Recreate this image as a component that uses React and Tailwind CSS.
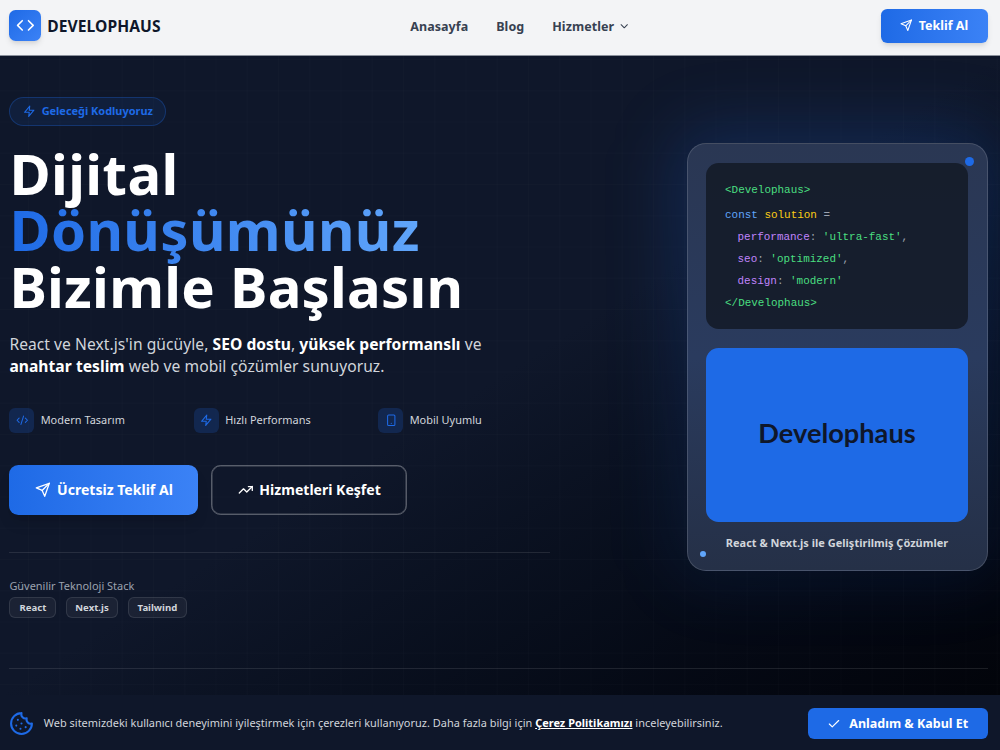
import clsx from 'clsx';
import { ChevronDown, Code, CodeXml, Smartphone, TrendingUp, Cookie, Check } from 'lucide-react';
import { FiSend, FiZap } from 'react-icons/fi';

const NAV = ['Anasayfa', 'Blog', 'Hizmetler'];

const FEATURES = [
  { label: 'Modern Tasarım', icon: CodeXml },
  { label: 'Hızlı Performans', icon: FiZap },
  { label: 'Mobil Uyumlu', icon: Smartphone },
];

const STACK = ['React', 'Next.js', 'Tailwind'];

const CODE = [
  { key: 'performance', value: "'ultra-fast'", comma: true },
  { key: 'seo', value: "'optimized'", comma: true },
  { key: 'design', value: "'modern'", comma: false },
];

function Header() {
  return (
    <header className="relative z-10 flex h-[56px] items-center justify-between border-b border-[#8b919c] bg-[#f3f4f6] pl-[9.4px] pr-[12.5px] pb-[3.5px]">
      <div className="flex w-[324px] items-center gap-[6.5px]">
        <div className="flex size-[31.25px] items-center justify-center rounded-[6.5px] bg-linear-to-br from-[#1e6ae6] to-[#3b82f6] text-white shadow-md">
          <Code size={18.75} />
        </div>
        <span className="pt-[2.5px] text-[15.6px] font-bold tracking-[0.08px] text-[#0f172a]">DEVELOPHAUS</span>
      </div>
      <nav className="flex items-center gap-[28px] pt-[2.5px] text-[12.5px] font-bold tracking-[0.06px] text-[#374151]">
        {NAV.map((item) => (
          <a key={item} href="#" className="flex items-center gap-[4px]">
            {item}
            {item === 'Hizmetler' && <ChevronDown size={12.5} className="mb-[2px]" />}
          </a>
        ))}
      </nav>
      <div className="flex w-[280px] justify-end">
        <button className="flex h-[34.4px] w-[106.5px] items-center justify-center gap-[6px] rounded-[6.25px] bg-linear-to-r from-[#1e6ae6] to-[#3b82f6] text-[12.5px] font-bold text-white shadow-md">
          <FiSend size={12.5} />
          <span className="pt-[2px]">Teklif Al</span>
        </button>
      </div>
    </header>
  );
}

function CodeBlock() {
  return (
    <div className="h-[166px] rounded-[12.5px] bg-[#131a26]/85 px-[18.75px] pt-[16.5px] font-['Liberation_Mono',monospace] text-[10.94px] leading-[22px] text-[#9ca3af]">
      <p className="mb-[3px] text-[#4ade80]">&lt;Develophaus&gt;</p>
      <p>
        <span className="text-[#60a5fa]">const</span> <span className="text-[#facc15]">solution</span> =
      </p>
      {CODE.map((line) => (
        <p key={line.key} className="pl-[12.5px]">
          <span className="text-[#c084fc]">{line.key}</span>: <span className="text-[#4ade80]">{line.value}</span>
          {line.comma && ','}
        </p>
      ))}
      <p className="text-[#4ade80]">&lt;/Develophaus&gt;</p>
    </div>
  );
}

function ShowcaseCard() {
  return (
    <div className="relative mt-[46.5px] h-[427.5px] w-[301px]">
      <div className="absolute -inset-[16px] rounded-[40px] bg-linear-to-b from-[#1e6ae6]/20 to-[#1e6ae6]/8 blur-[32px]" />
      <div className="relative h-full rounded-[19px] border border-white/15 bg-linear-to-b from-[#2a3753] via-[#2a3b5e] to-[#253047] p-[18.75px]">
        <CodeBlock />
        <div className="mt-[19px] flex h-[174.4px] items-center justify-center rounded-[12.5px] bg-[#1e6ae6] pb-[4px]">
          <span className="font-[Lato,sans-serif] text-[27.2px] font-bold text-[#0f172a]">Develophaus</span>
        </div>
        <p className="mt-[12px] text-center text-[10.94px] leading-[18px] font-bold tracking-[0.03px] text-[#d1d5db]">
          React &amp; Next.js ile Geliştirilmiş Çözümler
        </p>
        <span className="absolute top-[12.5px] right-[12.5px] size-[9.4px] rounded-full bg-[#1e6ae6]" />
        <span className="absolute bottom-[12.5px] left-[12.5px] size-[6.25px] rounded-full bg-[#60a5fa]" />
      </div>
    </div>
  );
}

function Hero() {
  return (
    <section className="relative flex h-[639px] flex-col overflow-hidden bg-linear-to-br from-[#0f172a] from-50% to-[#02040a] pl-[9.4px] pr-[12.5px] pt-[40.5px]">
      <div className="absolute inset-0 bg-[linear-gradient(rgba(255,255,255,0.011)_1px,transparent_1px),linear-gradient(90deg,rgba(255,255,255,0.011)_1px,transparent_1px)] bg-size-[31.25px_31.25px] bg-position-[28px_3px]" />
      <div className="relative flex h-[571px] justify-between">
        <div className="w-[541px]">
          <div className="flex h-[29.7px] w-[157px] items-center gap-[6.25px] rounded-full border border-[#1e6ae6]/30 bg-[#1e6ae6]/10 pl-[12.5px] text-[10.94px] font-bold text-[#1e6ae6]">
            <FiZap size={12.5} />
            Geleceği Kodluyoruz
          </div>
          <h1 className="mt-[19px] text-[56.25px] leading-[56.25px] font-bold tracking-[0.25px] text-white">
            <span className="block tracking-[0.4px]">Dijital</span>
            <span className="-mb-[14px] block w-fit bg-linear-to-r from-[#1e6ae6] to-[#60a5fa] bg-clip-text pb-[14px] tracking-[0.36px] text-transparent">
              Dönüşümünüz
            </span>
            Bizimle Başlasın
          </h1>
          <p className="mt-[20.5px] w-[500px] text-[15.6px] leading-[21.9px] tracking-[0.05px] text-[#d1d5db]">
            React ve Next.js'in gücüyle, <strong className="font-bold text-white">SEO dostu</strong>,{' '}
            <strong className="font-bold text-white">yüksek performanslı</strong> ve{' '}
            <strong className="font-bold text-white">anahtar teslim</strong> web ve mobil çözümler sunuyoruz.
          </p>
          <div className="mt-[29.8px] grid grid-cols-3 gap-[12.5px]">
            {FEATURES.map(({ label, icon: Icon }) => (
              <div key={label} className="flex items-center gap-[6.25px] text-[10.94px] tracking-[0.03px] text-[#d1d5db]">
                <span className="flex size-[25px] items-center justify-center rounded-[6px] bg-[#1e6ae6]/20 text-[#1e6ae6]">
                  <Icon size={12.5} />
                </span>
                {label}
              </div>
            ))}
          </div>
          <div className="mt-[31.5px] flex gap-[12.5px] text-[14.06px] font-bold text-white">
            <button className="flex h-[50px] w-[189px] items-center justify-center gap-[6.5px] rounded-[9.4px] bg-linear-to-r from-[#1e6ae6] to-[#3b82f6] shadow-lg">
              <FiSend size={15.6} />
              Ücretsiz Teklif Al
            </button>
            <button className="flex h-[50px] w-[196.5px] items-center justify-center gap-[6.25px] rounded-[9.4px] border border-white/30 ring-[0.6px] ring-white/25 ring-inset">
              <TrendingUp size={15.6} />
              Hizmetleri Keşfet
            </button>
          </div>
          <div className="mt-[37.2px] border-t border-white/10 pt-[25px]">
            <p className="text-[10.94px] leading-[16px] text-[#9ca3af]">Güvenilir Teknoloji Stack</p>
            <div className="mt-[3px] flex gap-[9.4px]">
              {STACK.map((name, i) => (
                <span
                  key={name}
                  className={clsx(
                    'flex h-[21px] items-center justify-center rounded-[6px] border border-white/10 bg-white/5 pt-[1px] text-[9.6px] font-bold text-[#d1d5db]',
                    ['w-[47px]', 'w-[52.5px]', 'w-[59.5px]'][i]
                  )}
                >
                  {name}
                </span>
              ))}
            </div>
          </div>
        </div>
        <ShowcaseCard />
      </div>
      <div className="relative border-t border-white/10" />
    </section>
  );
}

function CookieBar() {
  return (
    <footer className="relative flex h-[55px] items-center bg-[#0f172a] pl-[9.4px] pr-[12.5px] pt-[2px]">
      <Cookie size={25} className="text-[#1e6ae6]" />
      <p className="ml-[9.4px] flex-1 text-[10.94px] tracking-[0.018px] text-[#d1d5db]">
        Web sitemizdeki kullanıcı deneyimini iyileştirmek için çerezleri kullanıyoruz. Daha fazla bilgi için{' '}
        <a href="#" className="font-bold text-white underline">Çerez Politikamızı</a> inceleyebilirsiniz.
      </p>
      <button className="flex h-[31.25px] w-[179.5px] items-center justify-center gap-[8px] rounded-[6.25px] bg-[#1e6ae6] text-[12.5px] font-bold text-white">
        <Check size={14} />
        <span className="pt-[2px]">Anladım &amp; Kabul Et</span>
      </button>
    </footer>
  );
}

export default function App() {
  return (
    <div className="h-[750px] w-full overflow-hidden bg-[#0f172a] font-['Noto_Sans',sans-serif]">
      <Header />
      <Hero />
      <CookieBar />
    </div>
  );
}
